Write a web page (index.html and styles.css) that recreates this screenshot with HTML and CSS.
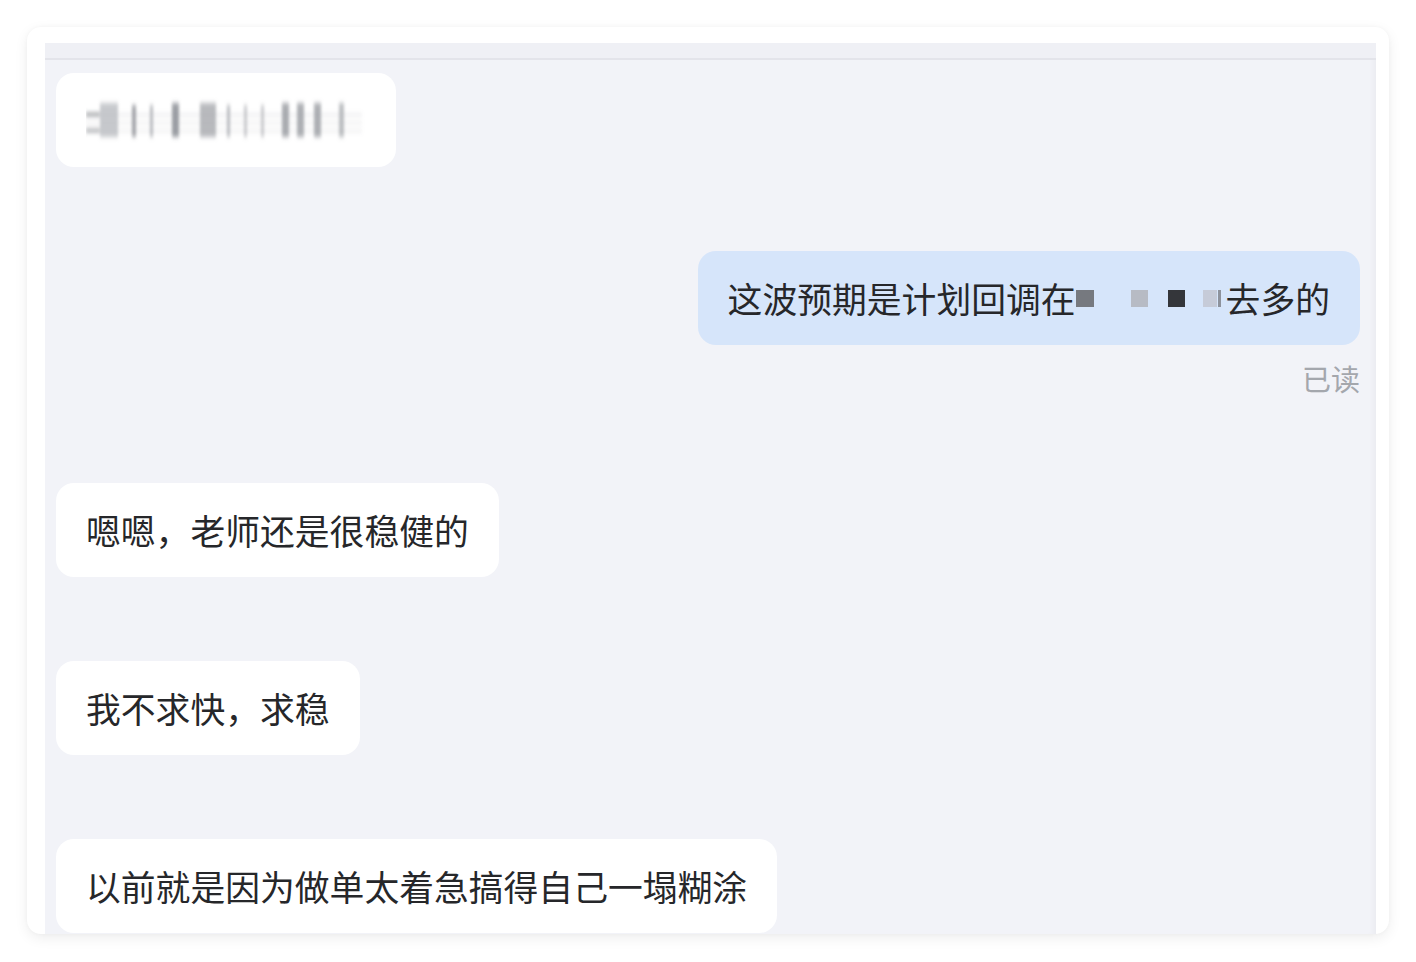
FILE: index.html
```html
<!DOCTYPE html>
<html lang="zh-CN">
<head>
<meta charset="utf-8">
<title>聊天</title>
<link rel="stylesheet" href="styles.css">
</head>
<body>
<div class="card">
  <div class="panel">
    <div class="panel-head"></div>
    <div class="chat">
      <div class="msg">
        <div class="bubble bubble-blur">
          <svg class="blurred" width="280" height="48" viewBox="0 0 280 48" aria-hidden="true">
            <defs>
              <filter id="bl" x="-10%" y="-30%" width="120%" height="160%">
                <feGaussianBlur stdDeviation="1.4 2.6"/>
              </filter>
            </defs>
            <g filter="url(#bl)">
              <rect x="0" y="17" width="276" height="1.6" fill="#9a9ca3" opacity="0.35"/>
              <rect x="0" y="25" width="276" height="1.6" fill="#9a9ca3" opacity="0.3"/>
              <rect x="0" y="33" width="276" height="1.6" fill="#9a9ca3" opacity="0.3"/>
              <rect x="0" y="16" width="14" height="3" fill="#55585e" opacity="0.7"/>
              <rect x="0" y="32" width="14" height="3" fill="#55585e" opacity="0.6"/>
              <rect x="14" y="6" width="18" height="34" fill="#b9bbc0" opacity="0.8"/>
              <rect x="46" y="8" width="4" height="32" fill="#8d9096" opacity="0.8"/>
              <rect x="64" y="8" width="3" height="32" fill="#9c9fa5" opacity="0.7"/>
              <rect x="86" y="6" width="7" height="34" fill="#85888e" opacity="0.8"/>
              <rect x="114" y="6" width="16" height="34" fill="#a7a9ae" opacity="0.8"/>
              <rect x="141" y="8" width="3" height="32" fill="#9c9fa5" opacity="0.7"/>
              <rect x="158" y="8" width="3" height="32" fill="#a6a8ad" opacity="0.6"/>
              <rect x="175" y="8" width="3" height="32" fill="#a6a8ad" opacity="0.6"/>
              <rect x="196" y="6" width="7" height="34" fill="#96999f" opacity="0.8"/>
              <rect x="211" y="6" width="7" height="34" fill="#9a9da3" opacity="0.8"/>
              <rect x="228" y="6" width="7" height="34" fill="#9a9da3" opacity="0.8"/>
              <rect x="253" y="6" width="5" height="34" fill="#a2a5aa" opacity="0.7"/>
            </g>
          </svg>
        </div>
      </div>

      <div class="msg self">
        <div class="bubble bubble-blue">这波预期是计划回调在<span class="redact"><i class="sq sq1"></i><i class="sq sq2"></i><i class="sq sq3"></i><i class="sq sq4"></i><i class="sq sq5"></i></span>去多的</div>
        <div class="read">已读</div>
      </div>

      <div class="msg">
        <div class="bubble">嗯嗯，老师还是很稳健的</div>
      </div>

      <div class="msg">
        <div class="bubble">我不求快，求稳</div>
      </div>

      <div class="msg">
        <div class="bubble">以前就是因为做单太着急搞得自己一塌糊涂</div>
      </div>
    </div>
  </div>
</div>
</body>
</html>
```

FILE: styles.css
```css
html, body {
  margin: 0;
  padding: 0;
  background: #ffffff;
}

body {
  width: 1416px;
  height: 962px;
  overflow: hidden;
  font-family: "Noto Sans CJK SC", "Noto Sans", sans-serif;
  color: #222326;
}

.card {
  margin: 27px 0 0 27px;
  width: 1362px;
  height: 907px;
  box-sizing: border-box;
  padding: 16px 13px 0 18px;
  background: #ffffff;
  border-radius: 14px;
  box-shadow: 0 4px 14px rgba(0, 0, 0, 0.07), 0 0 4px rgba(0, 0, 0, 0.03);
  overflow: hidden;
}

.panel {
  height: 100%;
  background: #f2f3f8;
  display: flex;
  flex-direction: column;
  overflow: hidden;
  box-shadow: inset -6px 0 6px -4px rgba(0, 0, 0, 0.04);
}

.panel-head {
  height: 15px;
  flex: none;
  background: #eff0f5;
  border-bottom: 2px solid #e3e4ea;
}

.chat {
  padding: 13px 16px 0 11px;
  display: flex;
  flex-direction: column;
}

.msg {
  display: flex;
  margin-bottom: 84px;
}

.msg.self {
  flex-direction: column;
  align-items: flex-end;
  margin-bottom: 85px;
}

.bubble {
  background: #ffffff;
  border-radius: 18px;
  padding: 23px 30px;
  font-size: 34.8px;
  line-height: 48px;
  white-space: nowrap;
  color: #26272a;
}

.bubble-blur {
  width: 340px;
  height: 94px;
  box-sizing: border-box;
  padding: 24px 30px 22px 30px;
}

.blurred {
  display: block;
}

.bubble-blue {
  background: #d6e5fa;
}

.redact {
  display: inline-flex;
  align-items: center;
  width: 150px;
  height: 48px;
  vertical-align: top;
}

.sq {
  display: block;
  height: 17px;
}

.sq1 {
  width: 18px;
  background: #76797f;
  margin-left: 0;
}

.sq2 {
  width: 17px;
  background: #b7bbc4;
  margin-left: 37px;
}

.sq3 {
  width: 17px;
  background: #34363a;
  margin-left: 20px;
}

.sq4 {
  width: 14px;
  background: #c6cbd8;
  margin-left: 18px;
}

.sq5 {
  width: 3px;
  background: #8d929c;
  margin-left: 1px;
}

.read {
  margin-top: 13px;
  font-size: 29px;
  line-height: 40px;
  color: #a4a7ad;
}
```
